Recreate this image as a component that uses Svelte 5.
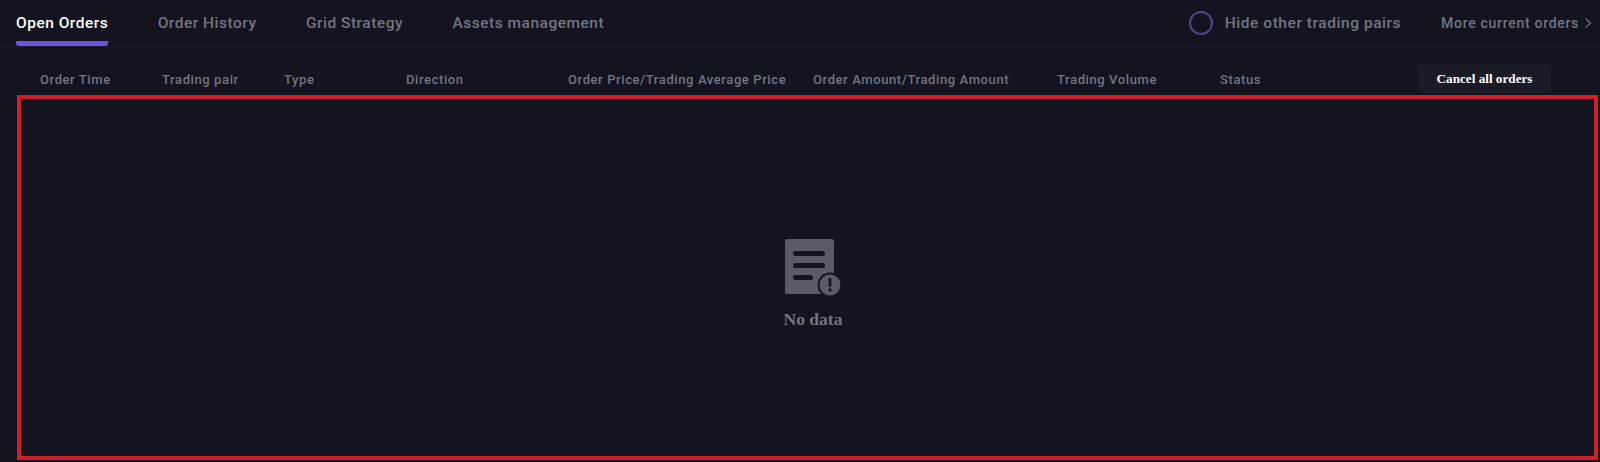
<script>
	const tabs = ['Open Orders', 'Order History', 'Grid Strategy', 'Assets management'];
	const columns = [
		'Order Time',
		'Trading pair',
		'Type',
		'Direction',
		'Order Price/Trading Average Price',
		'Order Amount/Trading Amount',
		'Trading Volume',
		'Status'
	];
</script>

<div class="orders">
	<div class="tab-bar">
		<div class="tabs">
			{#each tabs as tab, i}
				<span class="tab" class:active={i === 0}>{tab}</span>
			{/each}
		</div>
		<div class="tools">
			<span class="radio"></span>
			<span class="hide-label">Hide other trading pairs</span>
			<span class="more">More current orders</span>
			<svg class="chevron" width="8" height="12" viewBox="0 0 8 12" fill="none">
				<path d="M1.5 1.5 6.5 6l-5 4.5" stroke="#737482" stroke-width="1.2" />
			</svg>
		</div>
	</div>

	<div class="table-head">
		{#each columns as col}
			<span class="col">{col}</span>
		{/each}
		<button class="cancel">Cancel all orders</button>
	</div>

	<div class="table-body">
		<svg class="empty-icon" width="58" height="58" viewBox="0 0 58 58">
			<rect x="1" y="1" width="49" height="55" rx="2" fill="#5a5a68" />
			<rect x="9" y="13" width="32" height="5" rx="2.5" fill="#13141f" />
			<rect x="9" y="25" width="32" height="5" rx="2.5" fill="#13141f" />
			<rect x="9" y="37" width="20" height="5" rx="2.5" fill="#13141f" />
			<circle cx="46" cy="47" r="11.5" fill="#5a5a68" stroke="#13141f" stroke-width="2" />
			<rect x="44.6" y="40" width="2.8" height="9" rx="1.2" fill="#13141f" />
			<circle cx="46" cy="52" r="1.7" fill="#13141f" />
		</svg>
		<span class="empty-text">No data</span>
	</div>
</div>

<style>
	:global(body) {
		background: #13141f;
	}

	.orders {
		height: 462px;
		box-sizing: border-box;
		background: #13141f;
		font-family: Roboto, "Open Sans", sans-serif;
		overflow: hidden;
	}

	.tab-bar {
		display: flex;
		justify-content: space-between;
		height: 46px;
		border-bottom: 1px solid #1d1e29;
		padding-left: 16px;
	}

	.tabs {
		display: flex;
		gap: 49.5px;
	}

	.tab {
		height: 46px;
		box-sizing: border-box;
		padding-top: 14px;
		font-size: 15.5px;
		font-weight: 500;
		letter-spacing: 0.5px;
		line-height: 19px;
		color: #737482;
	}

	.tab.active {
		color: #fff;
		border-bottom: 5px solid #6f52e0;
		border-radius: 0 0 3px 3px;
	}

	.tools {
		display: flex;
		align-items: center;
		height: 46px;
		padding-right: 8px;
	}

	.radio {
		width: 24px;
		height: 24px;
		box-sizing: border-box;
		border: 2px solid #50468f;
		border-radius: 50%;
		margin-right: 12px;
	}

	.hide-label {
		font-size: 15.5px;
		font-weight: 500;
		letter-spacing: 0.55px;
		color: #737482;
		margin-right: 40px;
	}

	.more {
		font-size: 14px;
		font-weight: 500;
		letter-spacing: 0.7px;
		color: #737482;
		margin-right: 5px;
	}

	.table-head {
		display: grid;
		grid-template-columns: 122px 122px 122px 162px 245px 244px 163px 198px 133px;
		align-items: center;
		height: 48px;
		padding: 16px 0 0 40px;
		box-sizing: border-box;
	}

	.col {
		font-size: 13px;
		font-weight: 500;
		letter-spacing: 0.6px;
		color: #737482;
		white-space: nowrap;
	}

	.cancel {
		height: 28px;
		width: 133px;
		padding: 0;
		border: none;
		border-radius: 3px;
		background: #1a1b26;
		color: #fff;
		font-family: "Liberation Serif", serif;
		font-size: 13.2px;
		font-weight: 700;
	}

	.table-body {
		display: flex;
		flex-direction: column;
		align-items: center;
		height: 365px;
		box-sizing: border-box;
		margin: 0 2px 0 17px;
		border: 4px solid #d0202b;
		padding: 139px 0 0 11px;
	}

	.empty-text {
		margin-top: 13px;
		font-family: "Liberation Serif", serif;
		font-size: 17.5px;
		font-weight: 700;
		color: #737482;
	}
</style>
